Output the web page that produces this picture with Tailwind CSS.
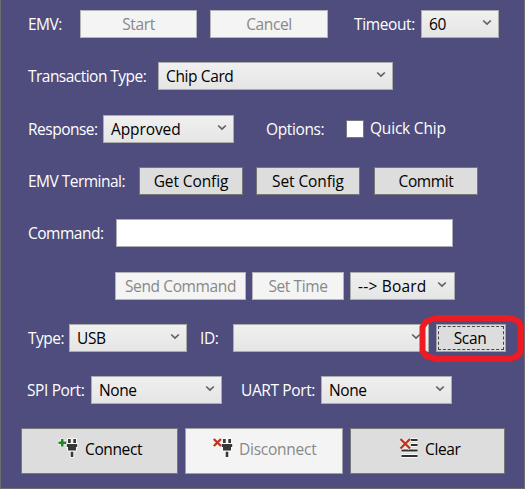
<!DOCTYPE html>
<html lang="en">
<head>
<meta charset="utf-8">
<title>Terminal control</title>
<script src="https://cdn.jsdelivr.net/npm/@tailwindcss/browser@4"></script>
</head>
<body class="w-[525px] h-[489px] overflow-hidden bg-[#4e4d7d] font-['Open_Sans',sans-serif] text-[15.5px] leading-5 tracking-[-0.38px] text-black whitespace-nowrap">
<svg class="hidden">
  <symbol id="chev" viewBox="0 0 10 7"><path d="M1.2 1.5 5 5.1 8.8 1.5" fill="none" stroke="#606060" stroke-width="1.7"/></symbol>
  <symbol id="plug" viewBox="0 0 12 20"><g stroke="#fafafa" stroke-width="2" stroke-linejoin="round" fill="#383838" paint-order="stroke"><path d="M2 1h2.700v4H2zM7.300 1H10v4H7.300zM4.700 13.500h2.600v5.500H4.700z"/><path d="M.8 6h10.400v3H10v3.500H2V9H.8z"/></g></symbol>
</svg>
<main class="w-[525px] h-[489px] border-l-[1.5px] border-r border-b border-[#6d6d70] pt-2.5 flex flex-col">
  <div class="flex h-7 items-center pl-[27px] mb-6">
    <span class="w-[52px] text-white tracking-[-0.5px]">EMV:</span>
    <button class="w-[117px] h-7 border border-[#b4b4b8] bg-[#f4f4f4] text-[#888]">Start</button>
    <button class="ml-[13px] w-[118px] h-7 border border-[#b4b4b8] bg-[#f4f4f4] text-[#888]">Cancel</button>
    <span class="ml-[26px] w-[67px] text-white">Timeout:</span>
    <div class="w-[78px] h-7 border border-[#acacac] bg-linear-to-b from-[#f0f0f0] to-[#e5e5e5] flex items-center pl-[7px] pr-[6px]"><span class="grow">60</span><svg class="w-[10px] h-[7px] -mt-1"><use href="#chev"/></svg></div>
  </div>
  <div class="flex h-7 items-center pl-[27px] mb-[25px]">
    <span class="w-[130px] text-white tracking-[-0.53px]">Transaction Type:</span>
    <div class="w-[235px] h-7 border border-[#acacac] bg-linear-to-b from-[#f0f0f0] to-[#e5e5e5] flex items-center pl-[7px] pr-[6px]"><span class="grow">Chip Card</span><svg class="w-[10px] h-[7px] -mt-1"><use href="#chev"/></svg></div>
  </div>
  <div class="flex h-7 items-center pl-[27px] mb-6">
    <span class="w-[75px] text-white tracking-[-0.5px]">Response:</span>
    <div class="w-[131px] h-7 border border-[#acacac] bg-linear-to-b from-[#f0f0f0] to-[#e5e5e5] flex items-center pl-[7px] pr-[6px]"><span class="grow tracking-[-0.1px]">Approved</span><svg class="w-[10px] h-[7px] -mt-1"><use href="#chev"/></svg></div>
    <span class="ml-[32px] w-[80px] text-white">Options:</span>
    <span class="w-[18px] h-[18px] bg-white border border-[#77777c]"></span>
    <span class="ml-[6px] -mt-0.5 text-white tracking-[-0.2px]">Quick Chip</span>
  </div>
  <div class="flex h-7 items-center pl-[27px] mb-6">
    <span class="w-[111px] text-white tracking-[-0.52px]">EMV Terminal:</span>
    <button class="w-[104px] h-7 border border-[#77777a] bg-[#ddd] tracking-[-0.1px]">Get Config</button>
    <button class="ml-[13px] w-[104px] h-7 border border-[#77777a] bg-[#ddd] tracking-[-0.1px]">Set Config</button>
    <button class="ml-[14px] w-[104px] h-7 border border-[#77777a] bg-[#ddd]">Commit</button>
  </div>
  <div class="flex h-7 items-center pl-[27px] mb-[25px]">
    <span class="w-[88px] text-white tracking-[-0.5px]">Command:</span>
    <div class="w-[337px] h-7 bg-white border border-[#abadb3]"></div>
  </div>
  <div class="flex h-7 items-center pl-[114px] mb-6">
    <button class="w-[131px] h-7 border border-[#b4b4b8] bg-[#f4f4f4] text-[#888]">Send Command</button>
    <button class="ml-[6px] w-[92px] h-7 border border-[#b4b4b8] bg-[#f4f4f4] text-[#888]">Set Time</button>
    <div class="ml-[6px] w-[105px] h-7 border border-[#acacac] bg-linear-to-b from-[#f0f0f0] to-[#e5e5e5] flex items-center pl-[7px] pr-[7px]"><span class="grow tracking-[0.2px]">--&gt; Board</span><svg class="w-[10px] h-[7px] -mt-1"><use href="#chev"/></svg></div>
  </div>
  <div class="flex h-7 items-center pl-[27px] mb-6">
    <span class="w-[41px] text-white tracking-[-0.5px]">Type:</span>
    <div class="w-[118px] h-7 border border-[#acacac] bg-linear-to-b from-[#f0f0f0] to-[#e5e5e5] flex items-center pl-[7px] pr-[6px]"><span class="grow">USB</span><svg class="w-[10px] h-[7px] -mt-1"><use href="#chev"/></svg></div>
    <span class="ml-[13px] w-[33px] text-white">ID:</span>
    <div class="w-[196px] h-7 border border-[#acacac] bg-linear-to-b from-[#f0f0f0] to-[#e5e5e5] flex items-center justify-end pr-[7px]"><svg class="w-[10px] h-[7px] -mt-1"><use href="#chev"/></svg></div>
    <div class="relative ml-[7px] w-[70px] h-7">
      <button class="w-[70px] h-7 border border-[#a0a0a8] bg-[#ddd] p-px"><span class="flex w-full h-full items-center justify-center border border-dashed border-[#444] pr-0.5">Scan</span></button>
      <svg class="absolute -left-[17px] -top-[9px] w-[106px] h-[49px]" viewBox="0 0 106 49"><path d="M14 4 20 3H88L98 5 101.500 10V37L98 41.500 89 44H18L7 41 3.500 36V12L7 6.500Z" fill="none" stroke="#ed1b24" stroke-width="6" stroke-linejoin="round"/></svg>
    </div>
  </div>
  <div class="flex h-7 items-center pl-[26px] mb-6">
    <span class="w-[64px] text-white">SPI Port:</span>
    <div class="w-[131px] h-7 border border-[#acacac] bg-linear-to-b from-[#f0f0f0] to-[#e5e5e5] flex items-center pl-[7px] pr-[6px]"><span class="grow">None</span><svg class="w-[10px] h-[7px] -mt-1"><use href="#chev"/></svg></div>
    <span class="ml-[19px] w-[80px] text-white">UART Port:</span>
    <div class="w-[131px] h-7 border border-[#acacac] bg-linear-to-b from-[#f0f0f0] to-[#e5e5e5] flex items-center pl-[7px] pr-[6px]"><span class="grow">None</span><svg class="w-[10px] h-[7px] -mt-1"><use href="#chev"/></svg></div>
  </div>
  <div class="flex pl-5 gap-[7px]">
    <button class="w-[157px] h-[46px] border border-[#77777a] bg-[#ddd] flex items-center pl-[35px]">
      <svg class="w-[22px] h-[22px] -mt-1.5" viewBox="0 0 22 22"><use href="#plug" x="9" y="1" width="12" height="20"/><path d="M5 1.500v8M1 5.500h8" stroke="#fafafa" stroke-width="4"/><path d="M5.200 2v7.500M1.500 5.700h7.700" stroke="#208527" stroke-width="2.600"/></svg>
      <span class="ml-[6px] -mt-1">Connect</span>
    </button>
    <button class="w-[158px] h-[46px] border border-[#a0a0a4] bg-[#f4f4f4] text-[#888] flex items-center pl-[26px]">
      <svg class="w-[22px] h-[22px] -mt-1.5" viewBox="0 0 22 22"><use href="#plug" x="9" y="1" width="12" height="20"/><path d="M1.800 2 9 9M9 2 1.800 9" stroke="#b8351f" stroke-width="2.300"/></svg>
      <span class="ml-[5px] -mt-1 tracking-[-0.25px]">Disconnect</span>
    </button>
    <button class="w-[155px] h-[46px] border border-[#77777a] bg-[#ddd] flex items-center pl-[48px]">
      <svg class="w-[20px] h-[22px] -mt-1.5" viewBox="0 0 20 22"><path d="M12 3h6.500M12 8h6.500M2.500 13.500h16M2.500 19h16" stroke="#fafafa" stroke-width="4"/><path d="M12 3h6.500M12 8h6.500M2.500 13.500h16M2.500 19h16" stroke="#303030" stroke-width="2.200"/><path d="M1.500 2 11 11.500M11 2 1.500 11.500" stroke="#f4e8e5" stroke-width="4"/><path d="M1.500 2 11 11.500M11 2 1.500 11.500" stroke="#b8351f" stroke-width="2.300"/></svg>
      <span class="ml-[6px] -mt-1">Clear</span>
    </button>
  </div>
</main>
</body>
</html>
